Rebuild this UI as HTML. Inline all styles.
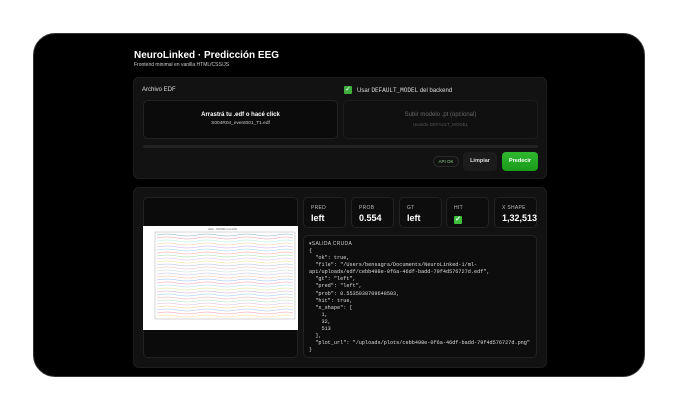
<!DOCTYPE html>
<html><head><meta charset="utf-8"><style>
*{box-sizing:border-box;margin:0;padding:0}
body{width:679px;height:411px;background:#fff;font-family:"Liberation Sans",sans-serif;position:relative;overflow:hidden;color:#eee}
.dev{position:absolute;left:33px;top:33px;width:612px;height:344px;background:#000;border-radius:22px;border:1px solid #333}
.a{position:absolute}
.panel{position:absolute;background:#121212;border:1px solid #1e1e1e;border-radius:6px}
.box{position:absolute;background:#0b0b0b;border:1px solid #222;border-radius:5px}
.card{position:absolute;background:#0d0d0d;border:1px solid #222;border-radius:5px;top:197px;height:31px}
.card .l{position:absolute;left:7px;top:7px;font-size:5px;color:#bbb;letter-spacing:.3px}
.card .v{position:absolute;left:7px;top:15px;font-size:9px;font-weight:bold;color:#fff}
pre{font-family:"Liberation Mono",monospace;font-size:5.2px;line-height:7.1px;color:#ddd}
</style></head><body>
<div class="dev"></div>
<div class="a" style="left:134px;top:50px;font-size:10px;font-weight:bold;color:#fff">NeuroLinked · Predicción EEG</div>
<div class="a" style="left:134px;top:62px;font-size:5px;color:#ccc">Frontend minimal en vanilla HTML/CSS/JS</div>

<div class="panel" style="left:133px;top:77px;width:414px;height:102px"></div>
<div class="a" style="left:142px;top:87px;font-size:6px;color:#ddd">Archivo EDF</div>
<div class="a" style="left:344px;top:86px;width:8px;height:8px;background:#3fae3f;border-radius:1px;color:#fff;font-size:7px;line-height:8px;text-align:center">✓</div>
<div class="a" style="left:357px;top:87px;font-size:6px;color:#ddd">Usar <span style="font-family:'Liberation Mono',monospace">DEFAULT_MODEL</span> del backend</div>
<div class="box" style="left:143px;top:100px;width:195px;height:39px"></div>
<div class="a" style="left:143px;top:112px;width:195px;text-align:center;font-size:6px;font-weight:bold;color:#fff">Arrastrá tu .edf o hacé click</div>
<div class="a" style="left:143px;top:121px;width:195px;text-align:center;font-size:4.8px;color:#ccc">S004R04_event001_T1.edf</div>
<div class="box" style="left:343px;top:100px;width:195px;height:39px;background:#101010;border-color:#1c1c1c"></div>
<div class="a" style="left:343px;top:112px;width:195px;text-align:center;font-size:6px;color:#666">Subir modelo .pt (opcional)</div>
<div class="a" style="left:343px;top:122px;width:195px;text-align:center;font-size:4.5px;color:#555">Usando DEFAULT_MODEL</div>
<div class="a" style="left:143px;top:145px;width:395px;height:3px;background:#222;border-radius:2px"></div>
<div class="a" style="left:433px;top:156px;width:26px;height:11px;border:1px solid #2a2a2a;border-radius:6px;font-size:4.5px;color:#8c8;text-align:center;line-height:10px">API OK</div>
<div class="a" style="left:463px;top:152px;width:34px;height:19px;background:#1b1b1b;border-radius:4px;font-size:5.5px;font-weight:bold;color:#ddd;text-align:center;line-height:19px">Limpiar</div>
<div class="a" style="left:502px;top:152px;width:36px;height:19px;background:linear-gradient(#2fb82f,#1a9a1a);border-radius:4px;font-size:5.5px;font-weight:bold;color:#fff;text-align:center;line-height:19px">Predecir</div>

<div class="panel" style="left:133px;top:187px;width:414px;height:181px"></div>
<div class="box" style="left:143px;top:197px;width:155px;height:161px"></div>
<div class="a" style="left:143px;top:226px;width:155px;height:104px;background:#fff;overflow:hidden">
<svg width="155" height="104" viewBox="0 0 155 104">
<text x="80" y="4" font-size="2.5" fill="#666" text-anchor="middle" font-family="Liberation Sans">EEG - S004R04 event001</text>
<rect x="12" y="6" width="140" height="87" fill="none" stroke="#999" stroke-width=".4"/>
<g fill="none" stroke-width=".5" id="t">
<path d="M14 9 q10 -2 20 0 t20 0 t20 0 t20 0 t20 0 t20 0 t16 0" stroke="#8ab"/>
</g>
<g fill="none" stroke-width=".5">
<path d="M14 9 q10 -2 20 0 t20 0 t20 0 t20 0 t20 0 t20 0 t16 0" stroke="#e9a" transform="translate(0,3)"/>
<path d="M14 9 q10 -2 20 0 t20 0 t20 0 t20 0 t20 0 t20 0 t16 0" stroke="#aed" transform="translate(0,6)"/>
<path d="M14 9 q10 -2 20 0 t20 0 t20 0 t20 0 t20 0 t20 0 t16 0" stroke="#fc9" transform="translate(0,9)"/>
<path d="M14 9 q10 -2 20 0 t20 0 t20 0 t20 0 t20 0 t20 0 t16 0" stroke="#cae" transform="translate(0,12)"/>
<path d="M14 9 q10 -2 20 0 t20 0 t20 0 t20 0 t20 0 t20 0 t16 0" stroke="#9cf" transform="translate(0,15)"/>
<path d="M14 9 q10 -2 20 0 t20 0 t20 0 t20 0 t20 0 t20 0 t16 0" stroke="#f99" transform="translate(0,18)"/>
<path d="M14 9 q10 -2 20 0 t20 0 t20 0 t20 0 t20 0 t20 0 t16 0" stroke="#9d9" transform="translate(0,21)"/>
<path d="M14 9 q10 -2 20 0 t20 0 t20 0 t20 0 t20 0 t20 0 t16 0" stroke="#dbe" transform="translate(0,24)"/>
<path d="M14 9 q10 -2 20 0 t20 0 t20 0 t20 0 t20 0 t20 0 t16 0" stroke="#fd8" transform="translate(0,27)"/>
<path d="M14 9 q10 -2 20 0 t20 0 t20 0 t20 0 t20 0 t20 0 t16 0" stroke="#abd" transform="translate(0,30)"/>
<path d="M14 9 q10 -2 20 0 t20 0 t20 0 t20 0 t20 0 t20 0 t16 0" stroke="#ebb" transform="translate(0,33)"/>
<path d="M14 9 q10 -2 20 0 t20 0 t20 0 t20 0 t20 0 t20 0 t16 0" stroke="#bdc" transform="translate(0,36)"/>
<path d="M14 9 q10 -2 20 0 t20 0 t20 0 t20 0 t20 0 t20 0 t16 0" stroke="#cbe" transform="translate(0,39)"/>
<path d="M14 9 q10 -2 20 0 t20 0 t20 0 t20 0 t20 0 t20 0 t16 0" stroke="#fb9" transform="translate(0,42)"/>
<path d="M14 9 q10 -2 20 0 t20 0 t20 0 t20 0 t20 0 t20 0 t16 0" stroke="#9be" transform="translate(0,45)"/>
<path d="M14 9 q10 -2 20 0 t20 0 t20 0 t20 0 t20 0 t20 0 t16 0" stroke="#e9b" transform="translate(0,48)"/>
<path d="M14 9 q10 -2 20 0 t20 0 t20 0 t20 0 t20 0 t20 0 t16 0" stroke="#ade" transform="translate(0,51)"/>
<path d="M14 9 q10 -2 20 0 t20 0 t20 0 t20 0 t20 0 t20 0 t16 0" stroke="#dd9" transform="translate(0,54)"/>
<path d="M14 9 q10 -2 20 0 t20 0 t20 0 t20 0 t20 0 t20 0 t16 0" stroke="#cad" transform="translate(0,57)"/>
<path d="M14 9 q10 -2 20 0 t20 0 t20 0 t20 0 t20 0 t20 0 t16 0" stroke="#9ce" transform="translate(0,60)"/>
<path d="M14 9 q10 -2 20 0 t20 0 t20 0 t20 0 t20 0 t20 0 t16 0" stroke="#eaa" transform="translate(0,63)"/>
<path d="M14 9 q10 -2 20 0 t20 0 t20 0 t20 0 t20 0 t20 0 t16 0" stroke="#bdb" transform="translate(0,66)"/>
<path d="M14 9 q10 -2 20 0 t20 0 t20 0 t20 0 t20 0 t20 0 t16 0" stroke="#dbd" transform="translate(0,69)"/>
<path d="M14 9 q10 -2 20 0 t20 0 t20 0 t20 0 t20 0 t20 0 t16 0" stroke="#fc8" transform="translate(0,72)"/>
<path d="M14 9 q10 -2 20 0 t20 0 t20 0 t20 0 t20 0 t20 0 t16 0" stroke="#abe" transform="translate(0,75)"/>
<path d="M14 9 q10 -2 20 0 t20 0 t20 0 t20 0 t20 0 t20 0 t16 0" stroke="#e9a" transform="translate(0,78)"/>
<path d="M14 9 q10 -2 20 0 t20 0 t20 0 t20 0 t20 0 t20 0 t16 0" stroke="#fd9" transform="translate(0,81)"/>
</g></svg></div>

<div class="card" style="left:303px;width:43px"><div class="l">PRED</div><div class="v">left</div></div>
<div class="card" style="left:351px;width:43px"><div class="l">PROB</div><div class="v">0.554</div></div>
<div class="card" style="left:399px;width:43px"><div class="l">GT</div><div class="v">left</div></div>
<div class="card" style="left:446px;width:43px"><div class="l">HIT</div><div class="v"><span style="display:inline-block;width:8px;height:8px;background:#3fbf3f;border-radius:1px;font-size:7px;line-height:8px;text-align:center">✓</span></div></div>
<div class="card" style="left:494px;width:43px"><div class="l">X SHAPE</div><div class="v">1,32,513</div></div>

<div class="box" style="left:303px;top:235px;width:234px;height:123px;background:#0d0d0d"></div>
<div class="a" style="left:309px;top:241px;font-size:5px;color:#ccc;letter-spacing:.3px">▾SALIDA CRUDA</div>
<pre class="a" style="left:309px;top:248px">{
  "ok": true,
  "file": "/Users/bensagra/Documents/NeuroLinked-1/ml-
api/uploads/edf/cebb498e-0f6a-46df-badd-79f4d576727d.edf",
  "gt": "left",
  "pred": "left",
  "prob": 0.5535038709648503,
  "hit": true,
  "x_shape": [
    1,
    32,
    513
  ],
  "plot_url": "/uploads/plots/cebb498e-0f6a-46df-badd-79f4d576727d.png"
}</pre>
</body></html>
